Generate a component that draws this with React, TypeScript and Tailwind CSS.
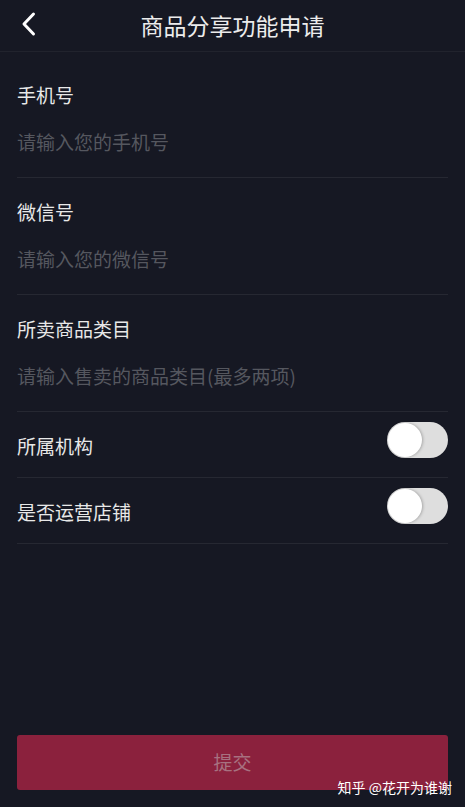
import React from "react";

const fields = [
  { label: "手机号", placeholder: "请输入您的手机号" },
  { label: "微信号", placeholder: "请输入您的微信号" },
  { label: "所卖商品类目", placeholder: "请输入售卖的商品类目(最多两项)" },
];

const toggles = ["所属机构", "是否运营店铺"];

const Toggle = () => (
  <div className="w-[61px] h-[36px] rounded-full bg-[#dedede] p-[1px] flex items-center">
    <div className="w-[34px] h-[34px] rounded-full bg-white shadow-[1px_0_3px_rgba(0,0,0,0.25)]" />
  </div>
);

export default function App() {
  return (
    <div
      className="w-[465px] h-[807px] bg-[#161823] flex flex-col text-white"
      style={{ fontFamily: '"Noto Sans CJK SC", "Noto Sans", sans-serif' }}
    >
      <header className="relative h-[52px] flex items-center justify-center border-b border-[#21232d] shrink-0">
        <svg
          className="absolute left-[19px] top-[11px]"
          width="20"
          height="26"
          viewBox="0 0 20 26"
          fill="none"
        >
          <path
            d="M14.5 3 L5 13 L14.5 23"
            stroke="#ffffff"
            strokeWidth="3"
            strokeLinecap="round"
            strokeLinejoin="round"
          />
        </svg>
        <h1 className="text-[23px] leading-[30px] font-normal text-[#ececec] pb-[2px]">
          商品分享功能申请
        </h1>
      </header>

      <div className="px-[17px] pt-[9px] flex flex-col">
        {fields.map((f) => (
          <div key={f.label} className="h-[117px] flex flex-col border-b border-[#262832]">
            <div className="pt-[20px] text-[19px] leading-[28px] text-[#e8e8e8]">{f.label}</div>
            <div className="pt-[19px] text-[19px] leading-[28px] text-[#55575f]">{f.placeholder}</div>
          </div>
        ))}
        {toggles.map((t) => (
          <div
            key={t}
            className="h-[66px] flex items-start justify-between border-b border-[#262832]"
          >
            <span className="pt-[20px] text-[19px] leading-[28px] text-[#e8e8e8]">{t}</span>
            <div className="pt-[10px]">
              <Toggle />
            </div>
          </div>
        ))}
      </div>

      <div className="flex-1" />

      <div className="relative px-[17px] pb-[17px]">
        <button className="w-full h-[55px] rounded-[3px] bg-[#8b213d] text-[19px] text-[#a77180]">
          提交
        </button>
        <span className="absolute right-[13px] bottom-[9px] text-[14px] text-white">
          知乎 @花开为谁谢
        </span>
      </div>
    </div>
  );
}
